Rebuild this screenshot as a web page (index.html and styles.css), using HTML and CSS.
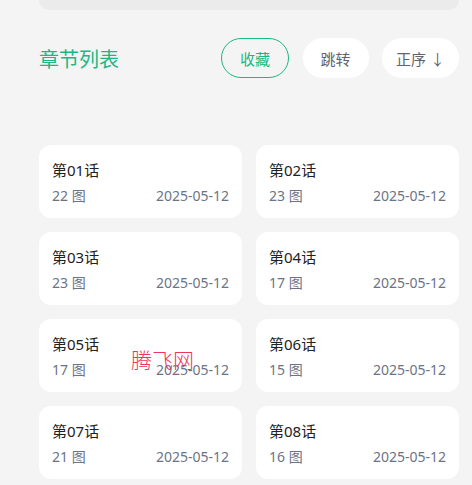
FILE: index.html
```
<!DOCTYPE html>
<html lang="zh-CN">
<head>
    <meta charset="UTF-8">
    <meta name="viewport" content="width=device-width, initial-scale=1.0">
    <title>章节列表</title>
    <link rel="stylesheet" href="styles.css">
</head>
<body>
    <div class="page">
        <div class="top-panel"></div>

        <div class="chapter-head">
            <h2 class="chapter-title">章节列表</h2>
            <div class="head-actions">
                <button class="pill pill-fav">收藏</button>
                <button class="pill">跳转</button>
                <button class="pill pill-sort">正序 ↓</button>
            </div>
        </div>

        <div class="chapter-grid" id="chapter-grid">
            <!-- chapters rendered below -->
        </div>

        <span class="watermark">腾飞网</span>
    </div>

    <script>
const chapters = [
    { name: '第01话', pics: 22, date: '2025-05-12' },
    { name: '第02话', pics: 23, date: '2025-05-12' },
    { name: '第03话', pics: 23, date: '2025-05-12' },
    { name: '第04话', pics: 17, date: '2025-05-12' },
    { name: '第05话', pics: 17, date: '2025-05-12' },
    { name: '第06话', pics: 15, date: '2025-05-12' },
    { name: '第07话', pics: 21, date: '2025-05-12' },
    { name: '第08话', pics: 16, date: '2025-05-12' },
];

const grid = document.getElementById('chapter-grid');
chapters.forEach((ch) => {
    const card = document.createElement('div');
    card.className = 'chapter-card';
    card.innerHTML = `
        <div class="chapter-name">${ch.name}</div>
        <div class="chapter-meta">
            <span>${ch.pics} 图</span>
            <span>${ch.date}</span>
        </div>
    `;
    grid.appendChild(card);
});
    </script>
</body>
</html>
```

FILE: styles.css
```
body {
    margin: 0;
    background-color: #f4f4f4;
    font-family: "Noto Sans", "Noto Sans CJK SC", sans-serif;
}

.page {
    position: relative;
    width: 420px;
    margin-left: 39px;
}

.top-panel {
    height: 10px;
    background-color: #ebebeb;
    border-radius: 0 0 10px 10px;
}

.chapter-head {
    display: flex;
    justify-content: space-between;
    align-items: center;
    margin-top: 28px;
}

.chapter-title {
    margin: 0;
    font-size: 20px;
    font-weight: normal;
    color: #19b884;
}

.head-actions {
    display: flex;
    gap: 13.5px;
}

.pill {
    height: 40px;
    padding: 0 18px;
    border: none;
    border-radius: 20px;
    background-color: #fff;
    color: #5f6470;
    font-family: inherit;
    font-size: 15px;
    cursor: pointer;
}

.pill-fav {
    border: 1px solid #19b884;
    color: #19b884;
    background-color: transparent;
}

.pill-sort {
    padding: 0 14px;
}

.chapter-grid {
    display: grid;
    grid-template-columns: 1fr 1fr;
    gap: 14px;
    margin-top: 67px;
}

.chapter-card {
    height: 73px;
    box-sizing: border-box;
    padding: 14px 13px 0;
    background-color: #fff;
    border-radius: 12px;
}

.chapter-name {
    font-size: 15px;
    color: #222;
    line-height: 22px;
}

.chapter-meta {
    display: flex;
    justify-content: space-between;
    margin-top: 5px;
    font-size: 14px;
    color: #6b7486;
    line-height: 20px;
}

.watermark {
    position: absolute;
    left: 92px;
    top: 344px;
    font-size: 21px;
    font-weight: 300;
    color: #ee3560;
    font-family: "Noto Sans CJK SC", sans-serif;
}
```
